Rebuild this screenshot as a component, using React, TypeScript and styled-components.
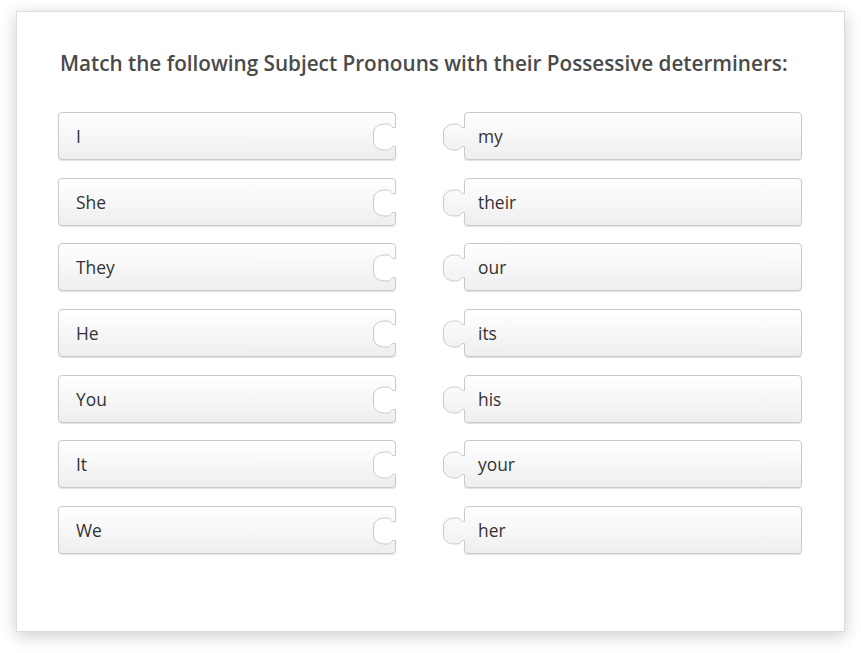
import React from 'react';
import styled, { createGlobalStyle } from 'styled-components';

const GlobalStyle = createGlobalStyle`
  html, body {
    margin: 0;
    padding: 0;
    background: #ffffff;
  }
  body {
    font-family: "Open Sans", "Liberation Sans", Arial, sans-serif;
  }
`;

const Page = styled.div`
  padding: 11px 16px 22px 16px;
  width: 861px;
  min-height: 653px;
  box-sizing: border-box;
`;

const Card = styled.div`
  box-sizing: border-box;
  width: 829px;
  height: 621px;
  background: #ffffff;
  border: 1px solid #dcdcdc;
  box-shadow: 0 4px 16px rgba(0, 0, 0, 0.2);
  padding: 37px 41px 0 41px;
`;

const Title = styled.h2`
  margin: 0 0 35px 2px;
  font-size: 20.7px;
  line-height: 28px;
  font-weight: 600;
  color: #4a4a4a;
`;

const Board = styled.div`
  display: grid;
  grid-template-columns: 338px 338px;
  column-gap: 68px;
  row-gap: 17.67px;
`;

const Piece = styled.div<{ $side: 'left' | 'right' }>`
  position: relative;
  box-sizing: border-box;
  height: 48px;
  border: 1px solid #c9c9c9;
  border-radius: 4px;
  background: linear-gradient(to bottom, #ffffff 0%, #f7f7f7 50%, #eeeeee 100%);
  box-shadow: 0 1px 1px rgba(0, 0, 0, 0.12);
  display: flex;
  align-items: center;
  padding-left: ${(p) => (p.$side === 'left' ? '17px' : '13px')};
  font-size: 17.4px;
  color: #333333;
`;

const Cut = styled.svg<{ $side: 'left' | 'right' }>`
  position: absolute;
  top: -1px;
  ${(p) => (p.$side === 'left' ? 'right: -1px;' : 'left: -23px;')}
  width: 25px;
  height: 48px;
  overflow: visible;
`;

const holeOutline =
  'H22 C20.5,15.5 20,12 16,12 H14 C8,12 2.5,15 2.5,21 V29 C2.5,35 8,38 14,38 H16 C20,38 20.5,34.5 22,34.5';

// hole cut into the right edge of a left-hand piece
const HoleShape = () => (
  <Cut $side="left" viewBox="0 0 25 48">
    <path d={`M27,15.5 ${holeOutline} H27 Z`} fill="#ffffff" />
    <path d={`M24.5,15.5 ${holeOutline} H24.5`} fill="none" stroke="#c9c9c9" strokeWidth="1" />
  </Cut>
);

const knobOutline =
  'H20.5 C19,15.5 18.5,12 14.5,12 H12.5 C7,12 1.5,15 1.5,21 V29 C1.5,35 7,38 12.5,38 H14.5 C18.5,38 19,34.5 20.5,34.5';

// knob sticking out of the left edge of a right-hand piece
const KnobShape = ({ id }: { id: string }) => (
  <Cut $side="right" viewBox="0 0 25 48">
    <defs>
      <linearGradient id={id} x1="0" y1="0" x2="0" y2="48" gradientUnits="userSpaceOnUse">
        <stop offset="0" stopColor="#ffffff" />
        <stop offset="0.5" stopColor="#f7f7f7" />
        <stop offset="1" stopColor="#eeeeee" />
      </linearGradient>
    </defs>
    <path d={`M25,15.5 ${knobOutline} H25 Z`} fill={`url(#${id})`} />
    <path d={`M22.5,15.5 ${knobOutline} H22.5`} fill="none" stroke="#c9c9c9" strokeWidth="1" />
  </Cut>
);

const pairs: [string, string][] = [
  ['I', 'my'],
  ['She', 'their'],
  ['They', 'our'],
  ['He', 'its'],
  ['You', 'his'],
  ['It', 'your'],
  ['We', 'her'],
];

export default function App() {
  return (
    <>
      <GlobalStyle />
      <Page>
        <Card>
          <Title>Match the following Subject Pronouns with their Possessive determiners:</Title>
          <Board>
            {pairs.map(([subject, possessive], i) => (
              <React.Fragment key={subject}>
                <Piece $side="left">
                  {subject}
                  <HoleShape />
                </Piece>
                <Piece $side="right">
                  <KnobShape id={`knob-grad-${i}`} />
                  {possessive}
                </Piece>
              </React.Fragment>
            ))}
          </Board>
        </Card>
      </Page>
    </>
  );
}
